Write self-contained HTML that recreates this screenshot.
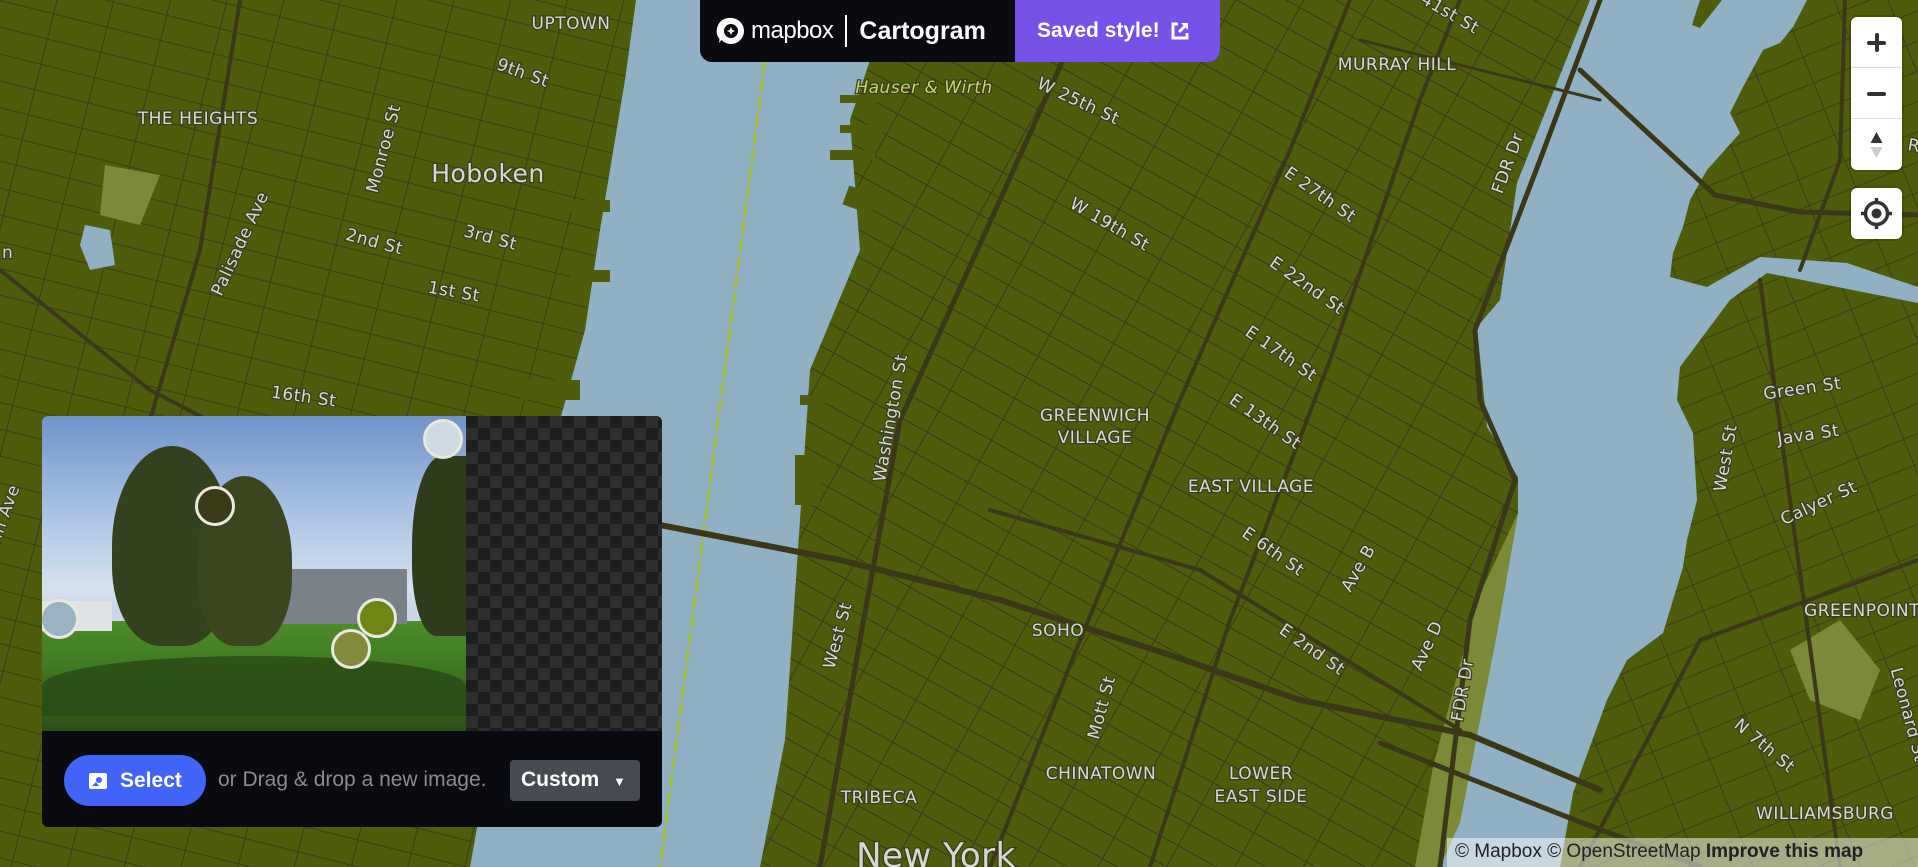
<!DOCTYPE html>
<html><head><meta charset="utf-8"><style>
*{margin:0;padding:0;box-sizing:border-box}
body{width:1918px;height:867px;overflow:hidden;background:#4d5d0c;font-family:"Liberation Sans",sans-serif;position:relative}
svg.map{position:absolute;left:0;top:0}
.lbl{font-family:"DejaVu Sans","Liberation Sans",sans-serif;fill:#d6d9d0;stroke:#3b3a22;stroke-width:2.5px;paint-order:stroke;font-size:17px;letter-spacing:0.5px}
.hdr{position:absolute;left:700px;top:0;width:520px;height:62px;background:#090b10;border-radius:0 0 12px 12px;overflow:hidden}
.hdr .brand{position:absolute;left:16px;top:0;height:62px;display:flex;align-items:center;color:#fff}
.hdr .pur{position:absolute;left:315px;top:0;width:205px;height:62px;background:#7652e8;color:#fff;font-weight:bold;font-size:21px;display:flex;align-items:center;padding-left:22px}
.ctrl{position:absolute;left:1851px;width:51px;background:#fff;border-radius:6px;box-shadow:0 0 0 2px rgba(0,0,0,.1)}
.panel{position:absolute;left:42px;top:416px;width:620px;height:411px;background:#090b10;border-radius:6px;overflow:hidden}
.photo{position:absolute;left:0;top:0;width:424px;height:315px;overflow:hidden}
.check{position:absolute;left:424px;top:0;width:196px;height:315px;background:repeating-conic-gradient(#2e2e2e 0 25%,#1e1e1e 0 50%) 0 0/24px 24px}
.dot{position:absolute;width:40px;height:40px;border-radius:50%;border:3px solid #e8e8dc}
.sel{position:absolute;left:22px;top:339px;width:142px;height:51px;background:#4264fb;border-radius:26px;color:#fff;font-weight:bold;font-size:21px;display:flex;align-items:center;padding-left:24px}
.drag{position:absolute;left:176px;top:352px;color:#8a8c92;font-size:21px}
.cust{position:absolute;left:468px;top:344px;width:130px;height:41px;background:#474a50;border-radius:4px;color:#fff;font-weight:bold;font-size:21px;padding:8px 0 0 11px}
.attr{position:absolute;left:1447px;top:838px;width:471px;height:29px;background:rgba(255,255,255,.5);font-size:19px;color:#222;padding:3px 0 0 8px;white-space:nowrap}
</style></head><body>
<svg class="map" width="1918" height="867" viewBox="0 0 1918 867">
<defs>
<pattern id="g1" width="60" height="24" patternUnits="userSpaceOnUse" patternTransform="rotate(29)">
<rect width="60" height="24" fill="#4d5d0c"/>
<path d="M0 0H60M0 0V24" stroke="#3b391b" stroke-width="1.9"/>
</pattern>
<pattern id="g2" width="55" height="26" patternUnits="userSpaceOnUse" patternTransform="rotate(14)">
<rect width="55" height="26" fill="#4d5d0c"/>
<path d="M0 0H55M0 0V26" stroke="#3b391b" stroke-width="1.8"/>
</pattern>
<pattern id="g3" width="50" height="28" patternUnits="userSpaceOnUse" patternTransform="rotate(-22)">
<rect width="50" height="28" fill="#4d5d0c"/>
<path d="M0 0H50M0 0V28" stroke="#3b391b" stroke-width="1.8"/>
</pattern>
</defs>
<rect width="1918" height="867" fill="url(#g1)"/>
<rect width="640" height="867" fill="url(#g2)"/>
<rect x="1580" y="0" width="338" height="867" fill="url(#g3)"/>
<!-- Hudson -->
<polygon fill="#8fb1c3" points="636,0 881,0 870,60 850,120 860,250 810,370 800,520 785,740 760,867 470,867 500,700 520,520 560,420 585,330 600,230 610,170 625,80"/>
<g fill="#4d5d0c">
<rect x="840" y="95" width="45" height="8"/><rect x="840" y="125" width="45" height="8"/><rect x="830" y="150" width="45" height="10"/>
<rect x="845" y="190" width="30" height="20" transform="rotate(20 860 200)"/>
<rect x="800" y="395" width="25" height="10"/><rect x="795" y="455" width="25" height="50"/><rect x="560" y="200" width="50" height="12"/><rect x="570" y="270" width="40" height="12"/><rect x="520" y="380" width="60" height="20"/>
</g>
<line x1="765" y1="60" x2="660" y2="867" stroke="#a8c02a" stroke-width="2.5" stroke-dasharray="14 4"/>
<!-- East river -->
<polygon fill="#8fb1c3" points="1590,0 1807,0 1793,27 1780,43 1763,50 1743,87 1730,113 1740,133 1707,170 1690,200 1683,227 1673,253 1670,277 1707,287 1760,257 1847,263 1918,287 1918,303 1767,273 1730,300 1680,367 1677,400 1693,433 1697,500 1687,540 1683,567 1663,633 1627,660 1607,700 1573,793 1560,867 1440,867 1460,822 1497,633 1518,513 1518,477 1487,427 1477,327 1500,300 1517,183"/>
<polygon fill="#4d5d0c" points="1700,0 1722,0 1700,28 1692,25"/>
<polygon fill="#7b8a37" points="1518,513 1497,633 1460,822 1440,867 1415,867 1433,767 1477,600"/>
<polygon fill="#8fb1c3" points="85,225 110,230 115,265 90,270 80,245"/>
<polygon fill="#7b8a37" points="105,165 160,175 140,225 100,215"/>
<polygon fill="#7b8a37" points="1790,650 1840,620 1880,670 1860,720 1810,700"/>
<!-- major roads -->
<g stroke="#3b3719" fill="none" stroke-linecap="round">
<path d="M660 525 L840 560 L1000 600 L1170 655 L1300 700 L1470 735 L1600 790" stroke-width="6"/>
<path d="M990 510 L1200 570 L1460 730" stroke-width="4"/>
<path d="M820 867 L860 640 L900 420 L1000 200 L1090 0" stroke-width="5"/>
<path d="M990 867 L1080 640 L1180 400 L1290 150 L1350 0" stroke-width="4"/>
<path d="M1150 867 L1230 620 L1330 360 L1420 100 L1460 0" stroke-width="4"/>
<path d="M1440 867 L1470 620 L1515 480 L1480 400 L1475 330 L1540 160 L1600 0" stroke-width="5"/>
<path d="M1580 70 L1715 195 L1800 212 L1918 215" stroke-width="5"/>
<path d="M1580 867 L1700 640 L1918 560" stroke-width="4"/>
<path d="M1380 743 L1580 822 L1700 867" stroke-width="5"/>
<path d="M1360 40 L1600 100" stroke-width="3"/>
<path d="M0 270 L150 390 L400 520" stroke-width="4"/>
<path d="M240 0 L200 250 L150 420" stroke-width="4"/>
<path d="M1760 280 L1840 867" stroke-width="4"/>
<path d="M1845 0 L1840 160 L1800 270" stroke-width="4"/>
</g>
<!-- labels -->
<g class="lbl">
<text x="571" y="29" text-anchor="middle">UPTOWN</text>
<text x="521" y="78" transform="rotate(20 521 78)" text-anchor="middle">9th St</text>
<text x="198" y="124" text-anchor="middle">THE HEIGHTS</text>
<text x="389" y="150" transform="rotate(-75 389 150)" text-anchor="middle">Monroe St</text>
<text x="488" y="182" text-anchor="middle" style="font-size:25px">Hoboken</text>
<text x="245" y="246" transform="rotate(-65 245 246)" text-anchor="middle">Palisade Ave</text>
<text x="373" y="247" transform="rotate(15 373 247)" text-anchor="middle">2nd St</text>
<text x="489" y="243" transform="rotate(15 489 243)" text-anchor="middle">3rd St</text>
<text x="453" y="297" transform="rotate(10 453 297)" text-anchor="middle">1st St</text>
<text x="303" y="402" transform="rotate(8 303 402)" text-anchor="middle">16th St</text>
<text x="924" y="93" text-anchor="middle" style="fill:#c8d760;font-style:italic">Hauser &amp; Wirth</text>
<text x="1076" y="106" transform="rotate(25 1076 106)" text-anchor="middle">W 25th St</text>
<text x="1397" y="70" text-anchor="middle">MURRAY HILL</text>
<text x="1440" y="14" transform="rotate(30 1440 14)" text-anchor="middle">E 41st St</text>
<text x="1513" y="165" transform="rotate(-70 1513 165)" text-anchor="middle">FDR Dr</text>
<text x="1317" y="199" transform="rotate(35 1317 199)" text-anchor="middle">E 27th St</text>
<text x="1107" y="229" transform="rotate(30 1107 229)" text-anchor="middle">W 19th St</text>
<text x="1304" y="290" transform="rotate(35 1304 290)" text-anchor="middle">E 22nd St</text>
<text x="1278" y="358" transform="rotate(35 1278 358)" text-anchor="middle">E 17th St</text>
<text x="1262" y="426" transform="rotate(35 1262 426)" text-anchor="middle">E 13th St</text>
<text x="896" y="419" transform="rotate(-80 896 419)" text-anchor="middle">Washington St</text>
<text x="1095" y="421" text-anchor="middle">GREENWICH</text>
<text x="1095" y="443" text-anchor="middle">VILLAGE</text>
<text x="1251" y="492" text-anchor="middle">EAST VILLAGE</text>
<text x="1270" y="556" transform="rotate(35 1270 556)" text-anchor="middle">E 6th St</text>
<text x="1363" y="571" transform="rotate(-60 1363 571)" text-anchor="middle">Ave B</text>
<text x="843" y="637" transform="rotate(-75 843 637)" text-anchor="middle">West St</text>
<text x="1058" y="636" text-anchor="middle">SOHO</text>
<text x="1309" y="654" transform="rotate(35 1309 654)" text-anchor="middle">E 2nd St</text>
<text x="1432" y="648" transform="rotate(-65 1432 648)" text-anchor="middle">Ave D</text>
<text x="1468" y="691" transform="rotate(-80 1468 691)" text-anchor="middle">FDR Dr</text>
<text x="1107" y="709" transform="rotate(-75 1107 709)" text-anchor="middle">Mott St</text>
<text x="1101" y="779" text-anchor="middle">CHINATOWN</text>
<text x="1261" y="779" text-anchor="middle">LOWER</text>
<text x="1261" y="802" text-anchor="middle">EAST SIDE</text>
<text x="879" y="803" text-anchor="middle">TRIBECA</text>
<text x="936" y="867" text-anchor="middle" style="font-size:34px">New York</text>
<text x="1803" y="394" transform="rotate(-8 1803 394)" text-anchor="middle">Green St</text>
<text x="1809" y="440" transform="rotate(-8 1809 440)" text-anchor="middle">Java St</text>
<text x="1731" y="459" transform="rotate(-80 1731 459)" text-anchor="middle">West St</text>
<text x="1821" y="508" transform="rotate(-25 1821 508)" text-anchor="middle">Calyer St</text>
<text x="1862" y="616" text-anchor="middle">GREENPOINT</text>
<text x="1761" y="750" transform="rotate(40 1761 750)" text-anchor="middle">N 7th St</text>
<text x="1825" y="819" text-anchor="middle">WILLIAMSBURG</text>
<text x="1903" y="716" transform="rotate(75 1903 716)" text-anchor="middle">Leonard St</text>
<text x="1890" y="147" transform="rotate(10 1890 147)" text-anchor="middle">47th R</text>
<text x="8" y="520" transform="rotate(-70 8 520)" text-anchor="middle">win Ave</text>
<text x="2" y="258">n</text>
</g>
</svg>

<div class="hdr">
 <div class="brand">
  <svg width="30" height="30" viewBox="0 0 30 30"><path d="M15 2a13 13 0 1 1-9.5 21.9L3 27l0.6-3.8A13 13 0 0 1 15 2z" fill="#fff"/><circle cx="15" cy="15" r="7" fill="#090b10"/><path d="M15 11l1.3 2.7 2.7 1.3-2.7 1.3L15 19l-1.3-2.7L11 15l2.7-1.3z" fill="#fff"/></svg>
  <span style="font-size:24px;margin-left:5px;letter-spacing:-0.5px">mapbox</span>
  <span style="width:2px;height:32px;background:#fff;margin:0 12px"></span>
  <span style="font-size:25px;font-weight:bold">Cartogram</span>
 </div>
 <div class="pur">Saved style!
  <svg width="20" height="20" viewBox="0 0 20 20" style="margin-left:10px"><path d="M8 3H3v14h14v-5" fill="none" stroke="#fff" stroke-width="3"/><path d="M11 2h7v7z" fill="#fff"/><path d="M17 3l-8 8" stroke="#fff" stroke-width="3"/></svg>
 </div>
</div>

<div class="ctrl" style="top:17px;height:153px">
 <div style="height:51px;border-bottom:1px solid #ddd;position:relative"><div style="position:absolute;left:16px;top:24px;width:19px;height:4px;background:#333;border-radius:2px"></div><div style="position:absolute;left:24px;top:16px;width:4px;height:19px;background:#333;border-radius:2px"></div></div>
 <div style="height:51px;border-bottom:1px solid #ddd;position:relative"><div style="position:absolute;left:16px;top:24px;width:19px;height:4px;background:#333;border-radius:2px"></div></div>
 <div style="height:51px;position:relative"><svg width="51" height="51" viewBox="0 0 51 51"><path d="M25.5 13l-6 11h12z" fill="#333"/><path d="M25.5 39l-6-11h12z" fill="#ccc"/></svg></div>
</div>
<div class="ctrl" style="top:188px;height:51px">
 <svg width="51" height="51" viewBox="0 0 51 51"><circle cx="25.5" cy="25.5" r="11" fill="none" stroke="#333" stroke-width="3.5"/><circle cx="25.5" cy="25.5" r="5" fill="#333"/><path d="M25.5 10v5M25.5 36v5M10 25.5h5M36 25.5h5" stroke="#333" stroke-width="3.5"/></svg>
</div>

<div class="panel">
 <div class="photo">
  <div style="position:absolute;inset:0;background:linear-gradient(180deg,#6f93c9 0%,#a9c2e2 30%,#d5e1ef 55%,#c9d6e6 62%)"></div>
  <div style="position:absolute;left:0;top:205px;width:424px;height:110px;background:linear-gradient(180deg,#4f8c2a 0%,#3f7a22 40%,#2c4f18 100%)"></div>
  <div style="position:absolute;left:0;top:240px;width:424px;height:60px;background:#294816;border-radius:50% 50% 0 0;opacity:.8"></div>
  <div style="position:absolute;left:225px;top:153px;width:140px;height:55px;background:#7a8189"></div>
  <div style="position:absolute;left:0;top:185px;width:70px;height:30px;background:#dfe3e6"></div>
  <div style="position:absolute;left:70px;top:30px;width:120px;height:200px;background:#34411e;border-radius:50% 50% 40% 40%"></div>
  <div style="position:absolute;left:155px;top:60px;width:95px;height:170px;background:#3a4620;border-radius:50% 50% 40% 40%"></div>
  <div style="position:absolute;left:370px;top:40px;width:60px;height:180px;background:#2f3c1b;border-radius:50% 0 0 40%"></div>
  <div class="dot" style="left:153px;top:70px;background:#3a3a16"></div>
  <div class="dot" style="left:381px;top:3px;background:#cfd9e3"></div>
  <div class="dot" style="left:-3px;top:183px;background:#9ab2c2"></div>
  <div class="dot" style="left:315px;top:182px;background:#6f8614"></div>
  <div class="dot" style="left:289px;top:213px;background:#848b3c"></div>
 </div>
 <div class="check"></div>
 <div class="sel"><svg width="20" height="18" viewBox="0 0 20 18" style="margin-right:12px"><rect x="1" y="1" width="18" height="16" rx="2" fill="#fff"/><circle cx="11" cy="8" r="3" fill="#4264fb"/><path d="M4 14l4-4 3 4z" fill="#4264fb"/></svg>Select</div>
 <div class="drag">or Drag &amp; drop a new image.</div>
 <div class="cust">Custom <span style="font-size:13px;margin-left:8px">▼</span></div>
</div>

<div class="attr">© Mapbox © OpenStreetMap <b>Improve this map</b></div>
</body></html>
